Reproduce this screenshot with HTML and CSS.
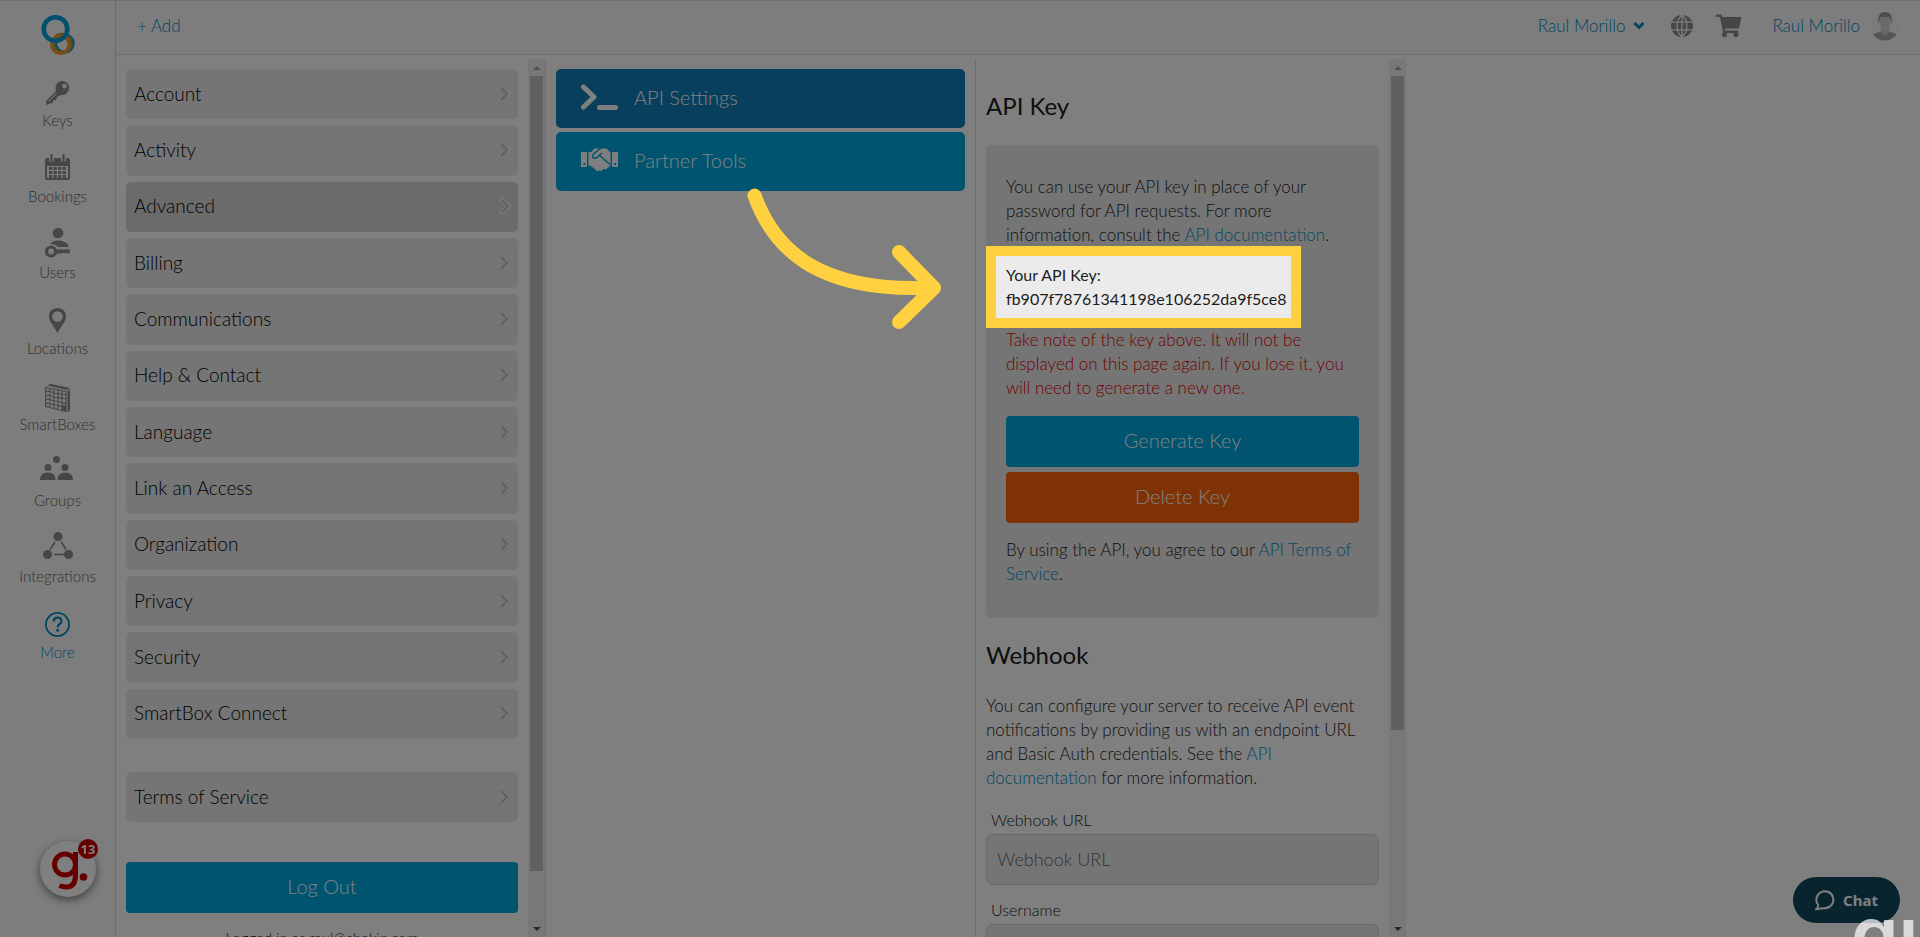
FILE: index.html
```html
<!DOCTYPE html>
<html lang="en">
<head>
<meta charset="utf-8">
<title>API Settings</title>
<link rel="stylesheet" href="styles.css">
</head>
<body>
<svg class="defs" aria-hidden="true">
  <symbol id="chev" viewBox="0 0 8 14"><path d="M1 1l6 6-6 6" fill="none" stroke="currentColor" stroke-width="1.4"/></symbol>
</svg>
<div class="app">
  <nav class="sidebar">
    <a class="logo" href="#" aria-label="Home">
      <svg width="36" height="42" viewBox="0 0 36 42" fill="none">
        <circle cx="24.500" cy="28.500" r="8.800" stroke="#00a0dc" stroke-width="3"/>
        <circle cx="22" cy="28.500" r="9" stroke="#a9a020" stroke-width="3.500"/>
        <circle cx="20.500" cy="29.500" r="8.700" stroke="#f59a35" stroke-width="3.600"/>
        <circle cx="15.500" cy="14" r="11.800" stroke="#00a0dc" stroke-width="4.500"/>
      </svg>
    </a>
    <a class="nav-item" href="#">
      <svg viewBox="0 0 40 40"><g fill="currentColor"><path fill-rule="evenodd" d="M24 9a7 7 0 1 1-1 13.900L19 25l-1 3-2.500.5-1 2.500-3 .5-1 1H8v-3.500l10.200-10A7 7 0 0 1 24 9zm2.500 2.800a2.300 2.300 0 1 0 0 4.600 2.300 2.300 0 0 0 0-4.600z"/></g><path d="M10.500 29.500l8-8" stroke="#fafafa" stroke-width="1"/></svg>
      <span>Keys</span>
    </a>
    <a class="nav-item" href="#">
      <svg viewBox="0 0 40 40"><path fill="currentColor" fill-rule="evenodd" d="M9 10h2v3.500h5V10h7v3.500h5V10h2q2 0 2 2v18q0 2-2 2H9q-2 0-2-2V12q0-2 2-2zm0 8v12h21V18z"/><path d="M13.500 7v6M25.500 7v6" stroke="currentColor" stroke-width="2.200" stroke-linecap="round"/><path d="M11 20.500h17M11 24.500h17M11 28.300h17" stroke="currentColor" stroke-width="2.800" stroke-dasharray="3.300 1.200"/></svg>
      <span>Bookings</span>
    </a>
    <a class="nav-item" href="#">
      <svg viewBox="0 0 40 40"><g fill="currentColor"><circle cx="20" cy="9" r="5.300"/><path d="M12 20q3-3.500 8-3.500 9 0 11 6.500H20q-2-3-8-3z"/><path d="M18 25.500h14v2l-1 2h-2l-1-1-1.500 1-1.500-1-1.500 1H18z"/></g><circle cx="13" cy="27.500" r="4.500" fill="none" stroke="currentColor" stroke-width="3.200"/></svg>
      <span>Users</span>
    </a>
    <a class="nav-item" href="#">
      <svg viewBox="0 0 40 40"><path fill="currentColor" fill-rule="evenodd" d="M19.500 8c5 0 8.500 3.500 8.500 8.500 0 5-4.500 9-8.500 16.500-4-7.500-8.500-11.500-8.500-16.500C11 11.500 14.500 8 19.500 8zm0 3.200a5.300 5.300 0 1 0 0 10.600 5.300 5.300 0 0 0 0-10.600z"/></svg>
      <span>Locations</span>
    </a>
    <a class="nav-item" href="#">
      <svg viewBox="0 0 40 40"><g fill="currentColor"><path d="M9 9.500L13 8l19 4-3 2z"/><path d="M29.500 15l2.500-2v22l-2.500 1z"/><path d="M24 29l4 1v5.500l-4-1z"/></g><path d="M7.700 11.500L28 15.500V35.500L7.700 30.500zM11.800 12.300v19.200M15.900 13v19.500M20 14v19.500M24 14.700v20M8 15l20 4M8 19l20 4M8 23l20 4.500M8 27l20 4.500" fill="none" stroke="currentColor" stroke-width="1.200"/></svg>
      <span>SmartBoxes</span>
    </a>
    <a class="nav-item" href="#">
      <svg viewBox="0 0 40 40"><g fill="currentColor"><circle cx="19.500" cy="7.500" r="3.500"/><circle cx="11" cy="15.500" r="3.500"/><circle cx="28" cy="15.500" r="3.500"/><path d="M3 28q0-7.500 7.700-7.500T18.500 28zM20.500 28q0-7.500 7.700-7.500T36 28z"/></g></svg>
      <span>Groups</span>
    </a>
    <a class="nav-item" href="#">
      <svg viewBox="0 0 40 40"><g fill="currentColor"><circle cx="20" cy="8.500" r="4.500"/><circle cx="9.500" cy="26.500" r="4.500"/><circle cx="30.500" cy="26.500" r="4.500"/></g><path d="M17 14l-5 8M23 13.500l5 8M16 26.500h10" stroke="currentColor" stroke-width="1.600"/></svg>
      <span>Integrations</span>
    </a>
    <a class="nav-item active" href="#">
      <svg viewBox="0 0 40 40" fill="none" stroke="currentColor"><circle cx="19.500" cy="20.500" r="11.600" stroke-width="1.800"/><path d="M15.800 17.500q0-3.800 3.800-3.800t3.800 3.500c0 3-3.700 2.800-3.700 6" stroke-width="2.300"/><circle cx="19.600" cy="26.300" r="1.500" fill="currentColor" stroke="none"/></svg>
      <span>More</span>
    </a>
  </nav>

  <div class="main">
    <header class="topbar">
      <a class="add" href="#">+ Add</a>
      <a class="account" href="#">Raul Morillo
        <svg width="12" height="9" viewBox="0 0 12 9"><path d="M1.500 1L6 5.500 10.500 1" fill="none" stroke="currentColor" stroke-width="3"/></svg></a>
      <a class="tool globe" href="#" aria-label="Language">
        <svg width="22" height="22" viewBox="0 0 22 22"><circle cx="11" cy="11" r="11" fill="currentColor"/><path d="M0 7.200h22M0 14.800h22M11 0v22M11 0C4.500 5 4.500 17 11 22M11 0c6.500 5 6.500 17 0 22" fill="none" stroke="#fafafa" stroke-width="1.300"/></svg></a>
      <a class="tool cart" href="#" aria-label="Cart">
        <svg width="26" height="24" viewBox="0 0 26 24" fill="currentColor"><path d="M0 1.500Q0 .5 1 .5h4.500l.6 2.500H24q1.500 0 1.200 1.400l-2 9q-.3 1-1.400 1H8.600l.4 2.200h12.500q1 .1.800 1.400l-.3 1H7.200L4 3H1Q0 3 0 2z"/><circle cx="8.500" cy="20.500" r="2.600"/><circle cx="20" cy="20.500" r="2.600"/></svg></a>
      <a class="user" href="#">Raul Morillo
        <svg width="30" height="30" viewBox="0 0 30 30"><clipPath id="av"><circle cx="15" cy="15" r="14.500"/></clipPath><g clip-path="url(#av)"><path d="M0 0h30v30H0z" fill="#f6f6f6"/><path d="M2 30V24q3-2 9-3.500l4 2 4-2q6 1.500 9 3.500v6z" fill="#aaa"/><path d="M11 15h8v6l-4 5-4-5z" fill="#ccc"/><ellipse cx="15" cy="12" rx="5.200" ry="7.500" fill="#d4d4d4"/><path d="M8.500 13Q7 1 15 1t6.500 12q-1-6-3-7.500-4 1-7 0Q9.500 7 8.500 13z" fill="#999"/></g></svg></a>
    </header>

    <div class="columns">
      <section class="column menu-col">
        <div class="content">
          <div class="menu">
            <a class="menu-item" href="#">Account<svg><use href="#chev"/></svg></a>
            <a class="menu-item" href="#">Activity<svg><use href="#chev"/></svg></a>
            <a class="menu-item current" href="#">Advanced<svg viewBox="0 0 13 18"><path d="M3 2.500l7 6.500-7 6.500" fill="none" stroke="#e9e9e9" stroke-width="5" stroke-linecap="round" stroke-linejoin="round"/><path d="M3 3l6 6-6 6" fill="none" stroke="#b5b5b5" stroke-width="1.400"/></svg></a>
            <a class="menu-item" href="#">Billing<svg><use href="#chev"/></svg></a>
            <a class="menu-item" href="#">Communications<svg><use href="#chev"/></svg></a>
            <a class="menu-item" href="#">Help &amp; Contact<svg><use href="#chev"/></svg></a>
            <a class="menu-item" href="#">Language<svg><use href="#chev"/></svg></a>
            <a class="menu-item" href="#">Link an Access<svg><use href="#chev"/></svg></a>
            <a class="menu-item" href="#">Organization<svg><use href="#chev"/></svg></a>
            <a class="menu-item" href="#">Privacy<svg><use href="#chev"/></svg></a>
            <a class="menu-item" href="#">Security<svg><use href="#chev"/></svg></a>
            <a class="menu-item" href="#">SmartBox Connect<svg><use href="#chev"/></svg></a>
          </div>
          <a class="menu-item terms" href="#">Terms of Service<svg><use href="#chev"/></svg></a>
          <button class="btn logout" type="button">Log Out</button>
          <p class="logged">Logged in as raul@chekin.com</p>
        </div>
        <div class="scrollbar"><i class="up"></i><div class="track"><b class="thumb long"></b></div><i class="down"></i></div>
      </section>

      <section class="column tiles">
        <div class="content">
          <a class="tile selected" href="#">
            <svg width="37" height="26" viewBox="0 0 37 26" fill="none" stroke="currentColor" stroke-linecap="round"><path d="M2.500 3l10.500 10-10.500 10" stroke-width="5" stroke-linejoin="round"/><path d="M18.500 23.500h16" stroke-width="5"/></svg>
            API Settings</a>
          <a class="tile" href="#">
            <svg width="37" height="26" viewBox="0 0 37 26" fill="currentColor"><path fill-rule="evenodd" d="M0 5h6v13.500q0 1.500-1.500 1.500H0zM2.500 16v2h2v-2zM31 5h6v15h-4.500q-1.500 0-1.500-1.500zM33 16v2h2v-2z"/><path d="M7.500 5h2.500l3.500-3.500h12L29 5h.5v13.500l-2.500 2-2 2-2.500-.5-2 1.800-2-.3-2.500.5-3.500-3L9 18.500H7.500z"/><path d="M20 1l-7.500 6q-2 3 .5 4.200 2 .8 5.500-3L29 17.500M18.500 8l2.500-2" fill="none" stroke="#00a8e1" stroke-width="1.500"/></svg>
            Partner Tools</a>
        </div>
      </section>

      <section class="column api">
        <div class="content">
          <h2>API Key</h2>
          <div class="panel">
            <p>You can use your API key in place of your password for API requests. For more information, consult the <a href="#">API documentation</a>.</p>
            <div class="key-box">Your API Key:<br>fb907f78761341198e106252da9f5ce8</div>
            <p class="warn">Take note of the key above. It will not be displayed on this page again. If you lose it, you will need to generate a new one.</p>
            <div class="buttons">
              <button class="btn" type="button">Generate Key</button>
              <button class="btn danger" type="button">Delete Key</button>
            </div>
            <p>By using the API, you agree to our <a href="#">API Terms of Service</a>.</p>
          </div>
          <h2>Webhook</h2>
          <p>You can configure your server to receive API event notifications by providing us with an endpoint URL and Basic Auth credentials. See the <a href="#">API documentation</a> for more information.</p>
          <div class="field first"><label for="url">Webhook URL</label><input id="url" type="text" placeholder="Webhook URL"></div>
          <div class="field"><label for="name">Username</label><input id="name" type="text"></div>
        </div>
        <div class="scrollbar"><i class="up"></i><div class="track"><b class="thumb"></b></div><i class="down"></i></div>
      </section>
    </div>
  </div>
</div>

<button class="guide" type="button" aria-label="Guide">
  <svg width="56" height="56" viewBox="0 0 56 56" fill="none" stroke="#cc0000"><circle cx="25" cy="23.500" r="10.500" stroke-width="5"/><path d="M35.500 11v23q0 12-9 12-4 0-7-1.500" stroke-width="5"/><circle cx="43.500" cy="36" r="3.800" fill="#cc0000" stroke="none"/></svg>
  <span>13</span>
</button>
<button class="chat" type="button">
  <svg width="20" height="21" viewBox="0 0 20 21" fill="none" stroke="currentColor" stroke-width="2"><path d="M3.200 15A8.500 8.500 0 1 1 10 18.200q-4 0-9 1.200 2.500-2 2.200-4.400z" stroke-linejoin="round"/></svg>
  Chat</button>

<div class="overlay"></div>
<svg class="arrow" width="210" height="150" viewBox="740 185 210 150" fill="none" stroke="#ffd03f" stroke-width="14" stroke-linecap="round" stroke-linejoin="round"><path d="M754.500 195.500C776 255 825 293 934 287.500M899 252l35 36-35 34"/></svg>
<div class="mark" aria-hidden="true">gu</div>
</body>
</html>
```
FILE: styles.css
```css
* { box-sizing: border-box; }
body {
  margin: 0;
  height: 100vh;
  overflow: hidden;
  font: 300 17px/24px Lato, "Open Sans", sans-serif;
  color: #1c1c1c;
  background: #fff;
}
a { color: #008cc4; text-decoration: none; }
h2, p { margin: 0; }
button, input { font: inherit; }
.defs { display: none; }

.app { display: flex; height: 100vh; }
.sidebar {
  flex: none;
  width: 116px;
  padding-top: 14px;
  background: #fafafa;
  border-right: 1px solid #d8d8d8;
  border-top: 1px solid #dcdcdc;
  display: flex;
  flex-direction: column;
  align-items: center;
}
.logo { height: 57px; }
.nav-item {
  height: 76px;
  display: flex;
  flex-direction: column;
  align-items: center;
  font-size: 15px;
  line-height: 16px;
  color: #8c8c8c;
}
.nav-item span { color: #666; }
.nav-item svg { width: 40px; height: 40px; }
.nav-item.active, .nav-item.active span { color: #008cc4; }

.main { flex: 1; min-width: 0; display: flex; flex-direction: column; }
.topbar {
  flex: none;
  height: 55px;
  padding: 0 20px 3px 21px;
  display: flex;
  align-items: center;
  background: #fafafa;
  border-top: 1px solid #dcdcdc;
  border-bottom: 1px solid #d8d8d8;
}
.add { margin-right: auto; }
.account, .user { display: flex; align-items: center; gap: 8px; }
.user { gap: 10px; margin-left: 30px; }
.tool { color: #8c8c8c; display: flex; }
.globe { margin-left: 26px; }
.cart { margin-left: 23px; }

.columns { flex: 1; min-height: 0; display: flex; padding-top: 4px; }
.column {
  flex: 0 1 430px;
  display: flex;
  min-height: 0;
  overflow: hidden;
  border-right: 1px solid #dcdcdc;
}
.api { border-right: 0; }
.content { flex: 1; min-width: 0; padding: 10px; overflow: hidden; }
.scrollbar {
  flex: none;
  width: 17px;
  padding: 0 2px;
  display: flex;
  flex-direction: column;
  align-items: center;
  background: #f1f1f1;
}
.track { flex: 1; align-self: stretch; }
.thumb { display: block; height: 77.5%; background: #c1c1c1; }
.thumb.long { height: 94.2%; }
.up, .down { height: 17px; display: flex; align-items: center; }
.up::before, .down::before {
  content: "";
  border: 4px solid transparent;
  border-top: 0;
  border-bottom: 4px solid #a0a0a0;
}
.down::before { border-bottom: 0; border-top: 4px solid #505050; }

.menu { display: grid; grid-auto-rows: 1fr; gap: 6px; min-height: 670px; }
.menu-item {
  display: flex;
  align-items: center;
  justify-content: space-between;
  min-height: 50px;
  padding: 0 10px 1px 8px;
  font-size: 19px;
  color: #000;
  background: #ebebeb;
  border-radius: 5px;
}
.menu-item svg { width: 8px; height: 14px; color: #b5b5b5; }
.menu-item.current { background: #d6d6d6; padding-right: 6px; }
.menu-item.current svg { width: 13px; height: 18px; }
.terms { margin-top: 33px; }
.btn {
  display: block;
  width: 100%;
  height: 51px;
  padding: 0 0 4px;
  border: 0;
  border-radius: 4px;
  font-size: 20px;
  color: #fff;
  background: #00a8e1;
}
.btn.danger { background: #fc650a; }
.logout { margin-top: 40px; }
.logged { margin-top: 13px; font-size: 15px; text-align: center; }

.tiles .content { display: flex; flex-direction: column; gap: 4px; }
.tile {
  height: 59px;
  padding: 0 25px 4px;
  display: flex;
  align-items: center;
  gap: 16px;
  font-size: 20px;
  color: #fff;
  background: #00a8e1;
  border-radius: 5px;
}
.tile.selected { background: #107eb8; }

.api .content { padding-top: 32px; }
h2 { font-size: 24px; line-height: 30px; font-weight: 400; margin-bottom: 24px; }
.panel {
  padding: 30px 20px 32px;
  margin-bottom: 22px;
  background: #ebebeb;
  border-radius: 5px;
}
.key-box {
  position: relative;
  z-index: 3;
  width: 315px;
  margin: -1px 0 0 -20px;
  padding: 7px 10px;
  border: 10px solid #ffd03f;
  background: #ebebeb;
  font-size: 16px;
  font-weight: 400;
}
.warn { color: #e00000; }
.buttons { display: grid; gap: 5px; margin: 16px 0 15px; }
.field { margin-top: 13px; font-size: 16px; }
.field.first { margin-top: 18px; }
.field label { display: block; padding-left: 5px; margin-bottom: 2px; }
.field input {
  display: block;
  width: 100%;
  height: 51px;
  padding: 0 10px 2px;
  font-size: 18px;
  background: #ebebeb;
  border: 1px solid #d2d2d2;
  border-radius: 7px;
}
.field input::placeholder { color: #666; }

.guide {
  position: fixed;
  left: 40px;
  bottom: 40px;
  width: 56px;
  height: 56px;
  padding: 0;
  border: 0;
  border-radius: 50%;
  background: #fff;
  box-shadow: 0 3px 8px rgba(0, 0, 0, .5);
}
.guide span {
  position: absolute;
  top: -2px;
  right: -2px;
  width: 20px;
  height: 20px;
  border-radius: 50%;
  background: #cc0000;
  color: #fff;
  font: 700 13px/20px "Open Sans", sans-serif;
}
.chat {
  position: fixed;
  right: 20px;
  bottom: 14px;
  width: 107px;
  height: 46px;
  padding: 0;
  display: flex;
  align-items: center;
  justify-content: center;
  gap: 8px;
  border: 0;
  border-radius: 23px;
  background: #104a5e;
  color: #fff;
  font: 700 15px/24px "Noto Sans", sans-serif;
}
.overlay { position: fixed; inset: 0; z-index: 2; background: rgba(0, 0, 0, .5); }
.arrow { position: fixed; left: 740px; top: 185px; z-index: 3; }
.mark {
  position: fixed;
  left: 1851px;
  top: 895px;
  z-index: 3;
  font: 600 76px/76px Inter, sans-serif;
  color: rgba(255, 255, 255, .7);
}
```
